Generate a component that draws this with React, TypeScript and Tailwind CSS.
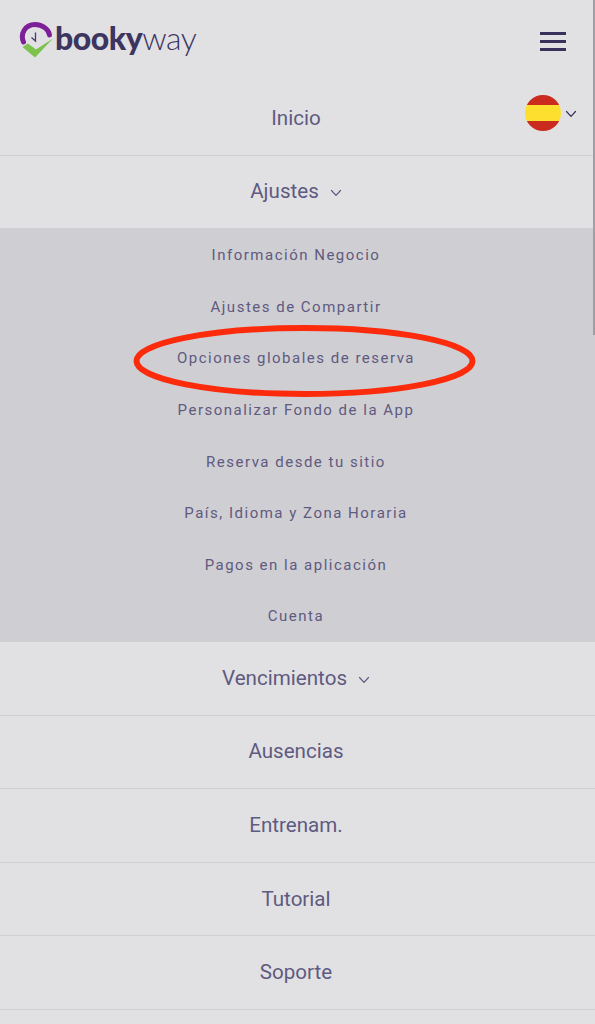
import React from "react";

const Chevron = ({ className }: { className: string }) => (
  <svg className={className} viewBox="0 0 12 8" fill="none" stroke="currentColor" strokeWidth="1.2" strokeLinecap="round" strokeLinejoin="round">
    <path d="M1.5 1.5 6 6.3l4.5-4.8" />
  </svg>
);

const Row = ({ label, chevron }: { label: string; chevron?: boolean }) => (
  <div className="flex h-[73.6px] items-center justify-center border-b border-[#d0d0d3] pr-[3px] text-[20.6px] text-[#5f5a80]">
    <span>{label}</span>
    {chevron && <Chevron className="ml-[11px] mt-[3px] h-[8px] w-[12px]" />}
  </div>
);

const subItems = [
  "Información Negocio",
  "Ajustes de Compartir",
  "Opciones globales de reserva",
  "Personalizar Fondo de la App",
  "Reserva desde tu sitio",
  "País, Idioma y Zona Horaria",
  "Pagos en la aplicación",
  "Cuenta",
];

export default function App() {
  return (
    <div className="relative h-[1024px] w-[595px] overflow-hidden bg-[#e1e1e4] font-['Roboto',sans-serif]">
      <header className="flex h-[82px] items-start justify-between pl-[19px] pr-[29px] pt-[22px]">
        <div className="flex items-start">
          <svg width="35" height="36" viewBox="0 0 35 36" fill="none">
            <path d="M4.500 20C1 12 6 2.500 16 2.500 24 2.500 30 8 30.500 13" stroke="#7d1f96" strokeWidth="5" strokeLinecap="round" />
            <path d="M3.500 25 9 21.500 17 27.500 34 16.500 16 35.500z" fill="#7cc24d" />
            <path d="M16.500 10.500v8.500l-4-3.500" stroke="#453d6b" strokeWidth="1.300" />
          </svg>
          <span className="ml-[1px] mt-[-2px] flex items-baseline font-['Lato',sans-serif] text-[32px] leading-[36px] tracking-[-0.5px] text-[#3d3560]">
            <span className="font-black">booky</span>
            <span className="font-light">way</span>
          </span>
        </div>
        <div className="mt-[10px] flex w-[26px] flex-col gap-[5.500px]">
          <div className="h-[2.500px] bg-[#38325a]" />
          <div className="h-[2.500px] bg-[#38325a]" />
          <div className="h-[2.500px] bg-[#38325a]" />
        </div>
      </header>

      <Row label="Inicio" />
      <Row label="Ajustes" chevron />

      <div className="flex h-[412.800px] flex-col bg-[#cfced3]">
        {subItems.map((s) => (
          <div key={s} className="flex h-[51.600px] items-center justify-center pr-[3px] pt-[1px] text-[15px] tracking-[1.500px] text-[#5f5a80]">
            {s}
          </div>
        ))}
      </div>

      <Row label="Vencimientos" chevron />
      <Row label="Ausencias" />
      <Row label="Entrenam." />
      <Row label="Tutorial" />
      <Row label="Soporte" />

      <div className="absolute left-[525px] top-[95px] flex items-center">
        <div className="flex h-[36px] w-[36px] flex-col overflow-hidden rounded-full">
          <div className="h-[10px] bg-[#cb2a1e]" />
          <div className="h-[16px] bg-[#fde02f]" />
          <div className="h-[10px] bg-[#cb2a1e]" />
        </div>
        <Chevron className="ml-[4px] mt-[1px] h-[8px] w-[12px] text-[#38325a]" />
      </div>

      <svg className="absolute left-[130px] top-[321px]" width="350" height="80" viewBox="0 0 350 80" fill="none">
        <ellipse cx="174.500" cy="40" rx="168" ry="33" stroke="#fb2b0c" strokeWidth="6" />
      </svg>

      <div className="absolute left-[593px] top-0 h-[335px] w-[2px] bg-[#a0a0a4]" />
    </div>
  );
}
